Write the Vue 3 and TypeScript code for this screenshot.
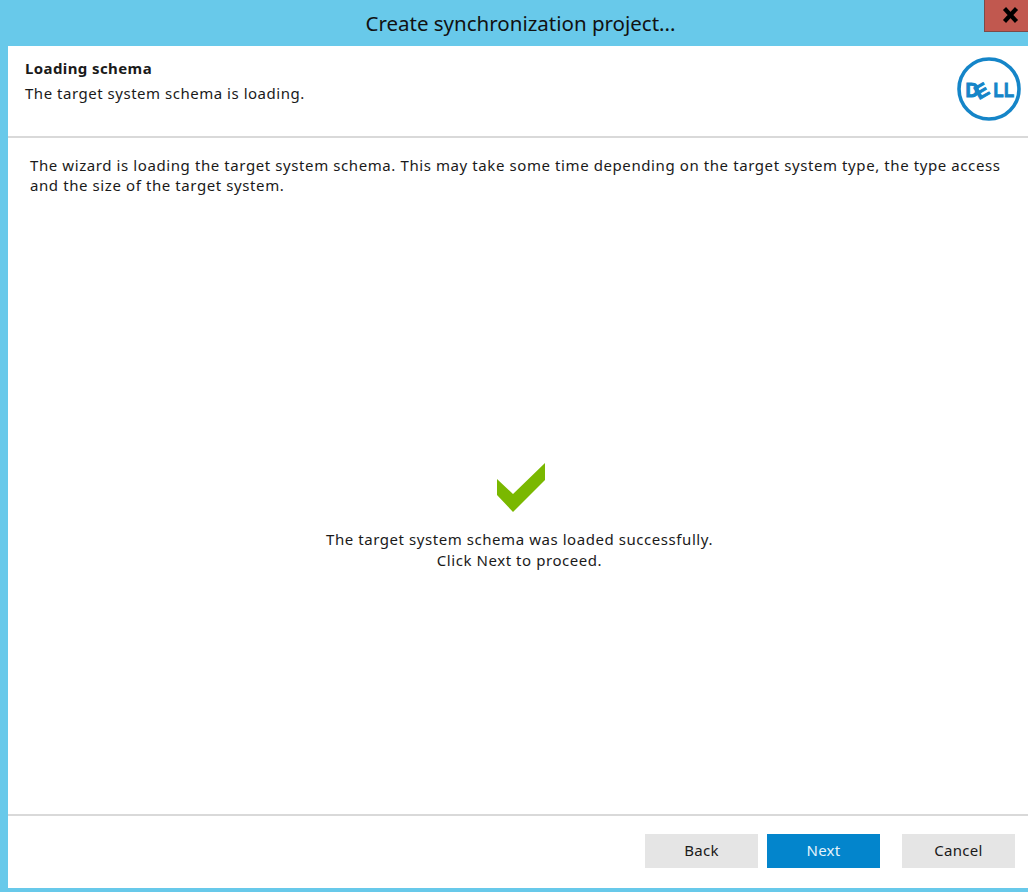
<script setup lang="ts">
const title = 'Create synchronization project...'
</script>

<template>
  <div class="window">
    <div class="titlebar">
      <span class="title">{{ title }}</span>
      <button class="close" aria-label="Close">
        <svg width="17" height="16" viewBox="0 0 17 16"><path d="M2.5 1.5 L14.5 14.5 M14.5 1.5 L2.5 14.5" stroke="#000" stroke-width="4.2" fill="none"/></svg>
      </button>
    </div>
    <div class="body">
      <header class="head">
        <div class="head-text">
          <div class="h1">Loading schema</div>
          <div class="h2">The target system schema is loading.</div>
        </div>
        <svg class="logo" width="66" height="66" viewBox="0 0 66 66">
          <circle cx="33" cy="33" r="30" fill="none" stroke="#1585c8" stroke-width="3.6"/>
          <g fill="#1585c8" stroke="#1585c8" stroke-width="1" font-family="'Liberation Sans', sans-serif" font-weight="700" font-size="20.5">
            <text x="9.5" y="41" textLength="14" lengthAdjust="spacingAndGlyphs">D</text>
            <text transform="translate(23 44) rotate(-30)" font-size="19" textLength="14" lengthAdjust="spacingAndGlyphs">E</text>
            <text x="37.5" y="41" textLength="21" lengthAdjust="spacingAndGlyphs">LL</text>
          </g>
        </svg>
      </header>
      <main class="content">
        <p class="intro">The wizard is loading the target system schema. This may take some time depending on the target system type, the type access and the size of the target system.</p>
        <div class="status">
          <svg class="check" width="50" height="50" viewBox="0 0 50 50"><path d="M0 16 L16 31 L48 0 L48 17 L16 49 L0 32 Z" fill="#7ab800"/></svg>
          <div>The target system schema was loaded successfully.</div>
          <div>Click Next to proceed.</div>
        </div>
      </main>
      <footer class="foot">
        <button class="btn">Back</button>
        <button class="btn primary">Next</button>
        <button class="btn cancel">Cancel</button>
      </footer>
    </div>
  </div>
</template>

<style>
html, body { margin: 0; background: #68c9ea; }
</style>

<style scoped>
.window {
  width: 1028px;
  height: 892px;
  background: #68c9ea;
  display: flex;
  flex-direction: column;
  overflow: hidden;
  font-family: "Noto Sans", "Open Sans", sans-serif;
  color: #1a1a1a;
  font-size: 15px;
  letter-spacing: 0.52px;
}
.titlebar {
  height: 46px;
  flex: none;
  position: relative;
  display: flex;
  justify-content: center;
  padding-top: 8px;
  box-sizing: border-box;
}
.title {
  font-size: 20.5px;
  letter-spacing: 0;
  line-height: 30px;
  color: #111;
  margin-left: 13px;
}
.close {
  position: absolute;
  top: 0;
  right: 0;
  width: 44px;
  height: 32px;
  box-sizing: border-box;
  border: 0;
  border-left: 1px solid #7d4a48;
  border-bottom: 1px solid #7d4a48;
  background: #c1584f;
  padding: 0 0 2px 7px;
  display: flex;
  align-items: center;
  justify-content: center;
}
.body {
  flex: none;
  height: 842px;
  margin-left: 8px;
  background: #fff;
  display: flex;
  flex-direction: column;
}
.head {
  height: 92px;
  flex: none;
  box-sizing: border-box;
  border-bottom: 2px solid #d9d9d9;
  display: flex;
  justify-content: space-between;
  padding: 12px 6px 0 17px;
}
.h1 { font-weight: 700; line-height: 21px; letter-spacing: 0.4px; }
.h2 { line-height: 21px; margin-top: 4px; }
.logo { margin-top: -2px; }
.content {
  flex: 1;
  display: flex;
  flex-direction: column;
  min-height: 0;
}
.intro {
  margin: 17px 18px 0 22px;
  line-height: 20px;
  letter-spacing: 0.59px;
}
.status {
  margin-top: 268px;
  text-align: center;
  line-height: 20.5px;
  letter-spacing: 0.56px;
  padding-left: 3px;
  display: flex;
  flex-direction: column;
  align-items: center;
}
.check { margin-bottom: 16px; margin-left: 4px; }
.foot {
  height: 74px;
  flex: none;
  box-sizing: border-box;
  border-top: 2px solid #d9d9d9;
  display: flex;
  padding: 18px 13px 0 637px;
  gap: 9px;
}
.btn {
  width: 113px;
  height: 34px;
  border: 0;
  background: #e5e5e5;
  color: #1a1a1a;
  font-family: inherit;
  font-size: 15px;
  letter-spacing: 0.3px;
  padding: 0 0 2px;
}
.primary { background: #0385cc; color: #e6f4fb; }
.cancel { margin-left: 13px; }
</style>
